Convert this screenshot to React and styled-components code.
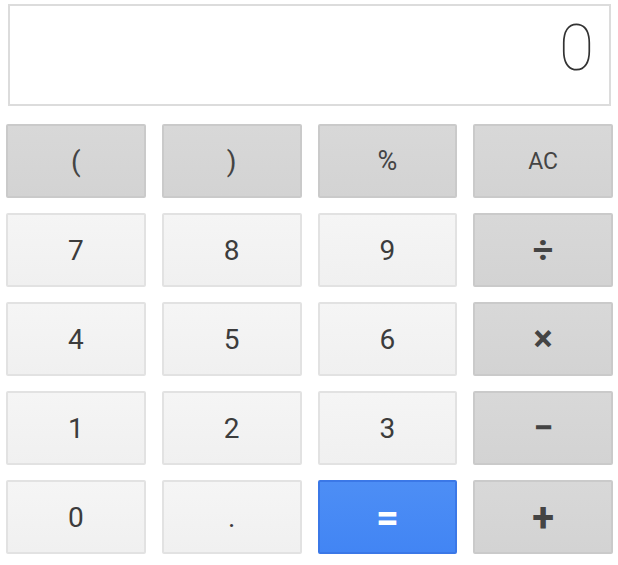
import React from "react";
import styled, { createGlobalStyle, css } from "styled-components";

const Global = createGlobalStyle`
  html, body { margin: 0; padding: 0; background: #ffffff; }
  body { font-family: Roboto, "Liberation Sans", Arial, sans-serif; }
`;

const Wrapper = styled.div`
  width: 618px;
  box-sizing: border-box;
  padding: 4px 5px 0 6px;
`;

const Display = styled.div`
  box-sizing: border-box;
  height: 102px;
  margin: 0 2px 18px 2px;
  border: 2px solid #dcdcdc;
  display: flex;
  align-items: center;
  justify-content: flex-end;
  padding: 0 15px 14px 0;
  font-family: Roboto, sans-serif;
  font-weight: 100;
  font-size: 64px;
  color: #333;
`;

const Keypad = styled.div`
  display: grid;
  grid-template-columns: repeat(4, 1fr);
  grid-auto-rows: 74px;
  column-gap: 16px;
  row-gap: 15px;
`;

const variants = {
  fn: css`
    background: linear-gradient(#d8d8d8, #d3d3d3);
    border-color: #cacaca;
    color: #444;
  `,
  num: css`
    background: linear-gradient(#f5f5f5, #f0f0f0);
    border-color: #e2e2e2;
    color: #3c3c3c;
  `,
  eq: css`
    background: linear-gradient(#4d8ef5, #4285f4);
    border-color: #3b78e7;
    color: #ffffff;
  `,
};

const Key = styled.button`
  box-sizing: border-box;
  border: 2px solid;
  border-radius: 2px;
  margin: 0;
  padding: 0;
  font-family: Roboto, "Liberation Sans", sans-serif;
  font-size: ${(p) => p.$size || 28}px;
  font-weight: ${(p) => (p.$bold ? 700 : 400)};
  display: flex;
  align-items: center;
  justify-content: center;
  ${(p) => variants[p.$kind]}
`;

const keys = [
  { label: "(", kind: "fn" },
  { label: ")", kind: "fn" },
  { label: "%", kind: "fn", size: 27 },
  { label: "AC", kind: "fn", size: 23 },
  { label: "7", kind: "num" },
  { label: "8", kind: "num" },
  { label: "9", kind: "num" },
  { label: "÷", kind: "fn", bold: true, size: 36 },
  { label: "4", kind: "num" },
  { label: "5", kind: "num" },
  { label: "6", kind: "num" },
  { label: "×", kind: "fn", bold: true, size: 36 },
  { label: "1", kind: "num" },
  { label: "2", kind: "num" },
  { label: "3", kind: "num" },
  { label: "−", kind: "fn", bold: true, size: 36 },
  { label: "0", kind: "num" },
  { label: ".", kind: "num" },
  { label: "=", kind: "eq", bold: true, size: 40 },
  { label: "+", kind: "fn", bold: true, size: 40 },
];

export default function App() {
  return (
    <>
      <Global />
      <Wrapper>
        <Display>0</Display>
        <Keypad>
          {keys.map((k) => (
            <Key key={k.label} $kind={k.kind} $bold={k.bold} $size={k.size}>
              {k.label}
            </Key>
          ))}
        </Keypad>
      </Wrapper>
    </>
  );
}
